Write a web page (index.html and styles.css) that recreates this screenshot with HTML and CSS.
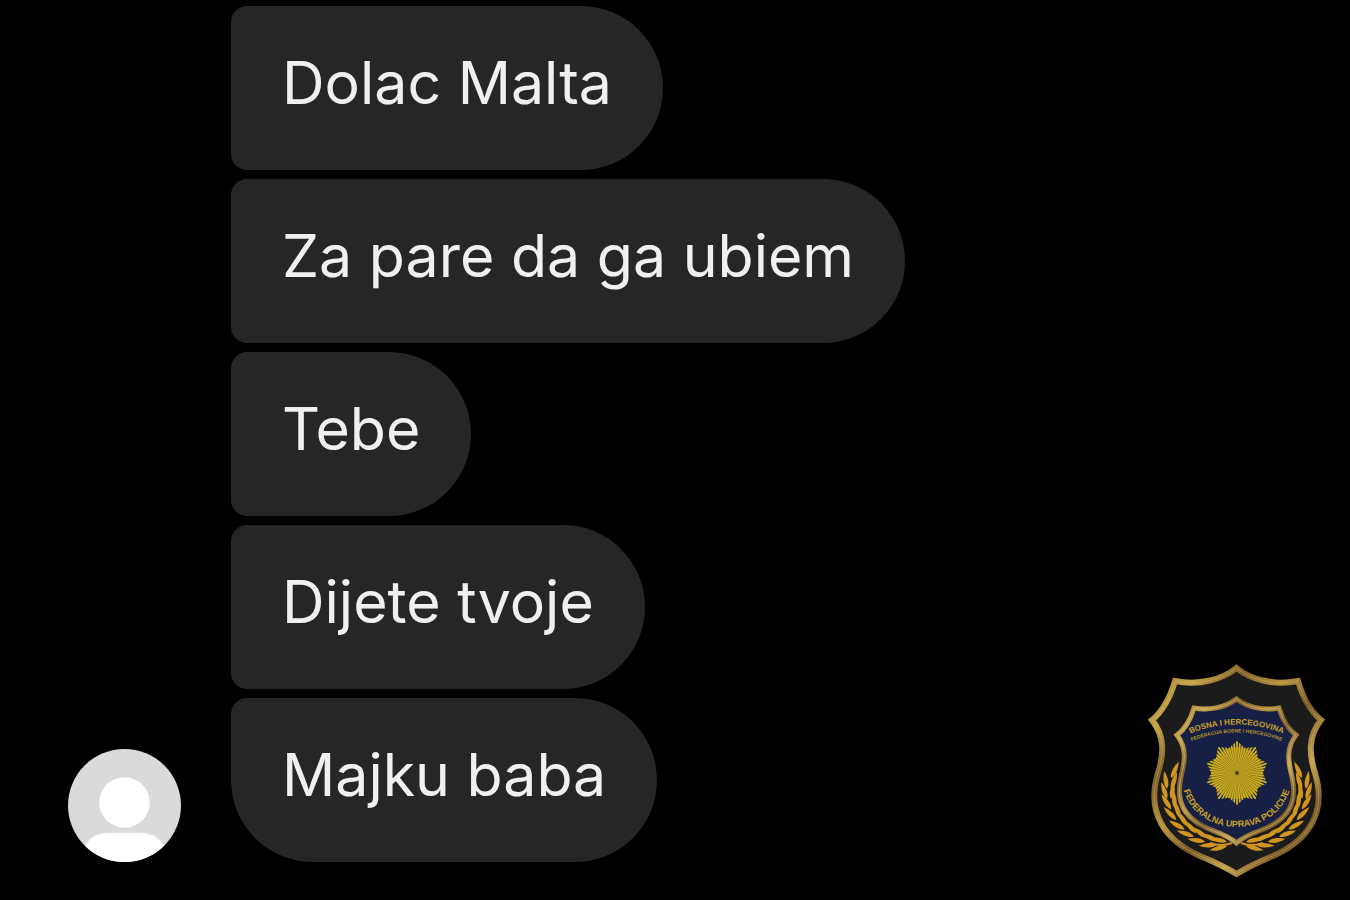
FILE: index.html
```
<!DOCTYPE html>
<html lang="bs">
<head>
    <meta charset="UTF-8">
    <meta name="viewport" content="width=device-width, initial-scale=1.0">
    <title>Poruke</title>
    <link rel="stylesheet" href="styles.css">
</head>
<body>

<main class="chat">
    <svg class="avatar" viewBox="0 0 112 112" role="img" aria-label="Profil">
        <clipPath id="avatarClip"><circle cx="56" cy="56" r="56"/></clipPath>
        <g clip-path="url(#avatarClip)">
            <rect width="112" height="112" fill="#dadada"/>
            <circle cx="56" cy="53" r="25" fill="#fff"/>
            <path d="M14 112V101Q22 83 40 83H72Q90 83 98 101V112Z" fill="#fff"/>
        </g>
    </svg>
    <div class="messages">
        <p class="message">Dolac Malta</p>
        <p class="message">Za pare da ga ubiem</p>
        <p class="message">Tebe</p>
        <p class="message">Dijete tvoje</p>
        <p class="message last">Majku baba</p>
    </div>
</main>

<svg class="badge" viewBox="0 0 193 225" role="img" aria-label="Federalna uprava policije">
    <defs>
        <linearGradient id="gold" x1="0" y1="0" x2="1" y2="1">
            <stop offset="0" stop-color="#8a6a28"/>
            <stop offset=".15" stop-color="#c9a54c"/>
            <stop offset=".28" stop-color="#80602a"/>
            <stop offset=".42" stop-color="#b8933e"/>
            <stop offset=".55" stop-color="#76572a"/>
            <stop offset=".7" stop-color="#c6a44f"/>
            <stop offset=".82" stop-color="#7d5d29"/>
            <stop offset="1" stop-color="#b08b3a"/>
        </linearGradient>
        <path id="outer" d="M96.5 8C83 19 60 26 35 21C30 38 23 51 12 60C25 76 24 94 18 113C6 152 24 180 60 196Q82 205 96.5 214Q111 205 133 196C169 180 187 152 175 113C169 94 168 76 181 60C170 51 163 38 158 21C133 26 110 19 96.5 8Z"/>
        <path id="inner" d="M96.5 39C86 47 70 51 54 48C50 61 44 70 37 75C47 88 45 101 41 117C34 148 50 162 74 171Q88 176 96.5 183Q105 176 119 171C143 162 159 148 152 117C148 101 146 88 156 75C149 70 143 61 139 48C123 51 107 47 96.5 39Z"/>
        <path id="leaf" d="M0 0C4-5 2-12 0-18C-3-12-3-4 0 0Z"/>
        <g id="pair">
            <use href="#leaf" transform="translate(-2 0) rotate(-14)"/>
            <use href="#leaf" transform="translate(2 0) rotate(14)"/>
        </g>
        <g id="laurel">
            <path d="M92 183Q82 187 70 183" fill="none" stroke="#d1941f" stroke-width="2"/>
            <use href="#pair" transform="translate(87 184) rotate(-90)"/>
            <use href="#pair" transform="translate(77 183) rotate(-78)"/>
            <use href="#pair" transform="translate(66 180) rotate(-66)"/>
            <use href="#pair" transform="translate(55 175) rotate(-56)"/>
            <use href="#pair" transform="translate(46 168) rotate(-46)"/>
            <use href="#pair" transform="translate(38 159) rotate(-30)"/>
            <use href="#pair" transform="translate(33 149) rotate(-18)"/>
            <use href="#pair" transform="translate(29 139) rotate(-4)"/>
            <use href="#pair" transform="translate(29 129) rotate(6)"/>
            <use href="#leaf" transform="translate(31 118) rotate(26)"/>
        </g>
        <clipPath id="star">
            <path d="M0-32L8-25L19-26L21-15L30-10L26 0L30 10L21 15L19 26L8 25L0 32L-8 25L-19 26L-21 15L-30 10L-26 0L-30-10L-21-15L-19-26L-8-25Z"/>
        </clipPath>
        <path id="arcTop" d="M42 77Q96.500 52 151 77"/>
        <path id="arcSecond" d="M42 85Q96.500 60 151 85"/>
        <path id="arcBottom" d="M42 125C54 181 139 181 151 125"/>
    </defs>
    <use href="#outer" fill="#1b1b1c" stroke="url(#gold)" stroke-width="6"/>
    <use href="#outer" fill="none" stroke="#d8bd70" stroke-width="1" opacity=".4"/>
    <g fill="#d1941f">
        <use href="#laurel"/>
        <use href="#laurel" transform="translate(193 0) scale(-1 1)"/>
    </g>
    <use href="#inner" fill="#171f45" stroke="url(#gold)" stroke-width="5"/>
    <use href="#inner" fill="none" stroke="#d8c58c" stroke-width="1" opacity=".6"/>
    <g transform="translate(97 113)">
        <g clip-path="url(#star)">
            <circle r="26" fill="#85701a"/>
            <circle r="16" fill="none" stroke="#cdb022" stroke-width="32" pathLength="120" stroke-dasharray="1.3 .7" stroke-dashoffset=".65" transform="rotate(-90)"/>
        </g>
        <circle r="2" fill="#4a4018"/>
    </g>
    <text class="badge-title"><textPath href="#arcTop" startOffset="50%">BOSNA I HERCEGOVINA</textPath></text>
    <text class="badge-sub"><textPath href="#arcSecond" startOffset="50%">FEDERACIJA BOSNE I HERCEGOVINE</textPath></text>
    <text class="badge-name"><textPath href="#arcBottom" startOffset="50%">FEDERALNA UPRAVA POLICIJE</textPath></text>
</svg>

</body>
</html>
```
FILE: styles.css
```
body {
    margin: 0;
    min-height: 100vh;
    position: relative;
    background: #000;
    color: #f0f0f0;
    font-family: Inter, "Liberation Sans", sans-serif;
}
.chat {
    display: flex;
    align-items: flex-end;
    gap: 50px;
    padding: 6px 20px 0 68px;
}
.avatar {
    width: 113px;
    height: 113px;
    flex-shrink: 0;
}
.messages {
    display: flex;
    flex-direction: column;
    align-items: flex-start;
    gap: 9px;
}
.message {
    margin: 0;
    padding: 41px 51px 51px 51px;
    background: #262626;
    border-radius: 16px 82px 82px 16px;
    font-size: 59px;
    line-height: 72px;
}
.message.last {
    border-bottom-left-radius: 82px;
}
/* grb lebdi preko razgovora */
.badge {
    position: absolute;
    right: 17px;
    bottom: 15px;
    width: 193px;
    height: 225px;
}
.badge text {
    font-family: "Liberation Sans", sans-serif;
    text-anchor: middle;
    fill: #c9a227;
}
.badge .badge-title {
    font-size: 8px;
    font-weight: bold;
}
.badge .badge-sub {
    font-size: 5px;
    font-weight: bold;
    fill: #b3942a;
}
.badge .badge-name {
    font-size: 9px;
    font-weight: bold;
}
```
